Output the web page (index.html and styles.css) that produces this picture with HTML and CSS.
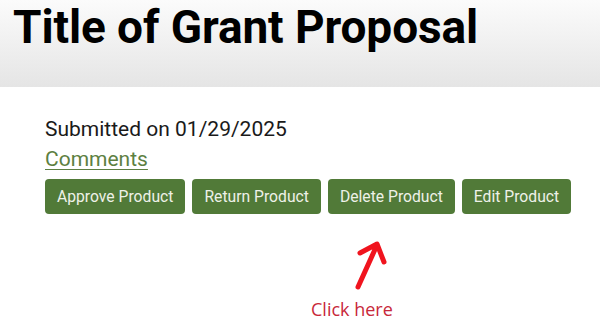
FILE: index.html
```html
<!DOCTYPE html>
<html>
<head>
<meta charset="utf-8">
<link rel="stylesheet" href="styles.css">
</head>
<body>
<header class="header">
  <h1 class="title">Title of Grant Proposal</h1>
</header>
<main class="content">
  <p class="submitted">Submitted on 01/29/2025</p>
  <a class="comments" href="#">Comments</a>
  <div class="actions">
    <button class="btn">Approve Product</button>
    <button class="btn">Return Product</button>
    <button class="btn">Delete Product</button>
    <button class="btn">Edit Product</button>
  </div>
  <div class="hint">
    <svg class="arrow" width="40" height="52" viewBox="0 0 40 52">
      <path d="M5 47 L24 5 M7 13 L24 4 L31 22" fill="none" stroke="#f0141e" stroke-width="5" stroke-linecap="round" stroke-linejoin="round"/>
    </svg>
    <span class="click">Click here</span>
  </div>
</main>
</body>
</html>
```
FILE: styles.css
```css
html, body {
  margin: 0;
  padding: 0;
  background: #ffffff;
  font-family: Roboto, "Liberation Sans", sans-serif;
}
.header {
  height: 87px;
  background: linear-gradient(#fbfbfb, #e5e5e5);
  padding-left: 13px;
  box-sizing: border-box;
}
.title {
  margin: 0;
  font-size: 46px;
  line-height: 54px;
  font-weight: 700;
  letter-spacing: -0.1px;
  color: #000;
}
.content {
  padding-left: 45px;
  padding-top: 29px;
}
.submitted {
  margin: 0;
  font-size: 21px;
  line-height: 26px;
  color: #1a1a1a;
}
.comments {
  display: block;
  width: max-content;
  font-size: 21px;
  line-height: 26px;
  color: #5d7f42;
  text-decoration: underline;
  text-decoration-thickness: 1px;
  text-underline-offset: 3px;
  margin-top: 4px;
}
.actions {
  display: flex;
  gap: 7px;
  margin-top: 7px;
}
.btn {
  height: 35px;
  padding: 0 12px;
  border: none;
  border-radius: 4px;
  background: #517a38;
  color: #eef1e8;
  font-family: Roboto, "Liberation Sans", sans-serif;
  font-size: 15.7px;
}
.hint {
  position: relative;
  height: 110px;
}
.arrow {
  position: absolute;
  left: 308px;
  top: 26px;
}
.click {
  position: absolute;
  left: 266px;
  top: 83px;
  font-family: "Open Sans", sans-serif;
  font-size: 18px;
  color: #c8283a;
}
```
